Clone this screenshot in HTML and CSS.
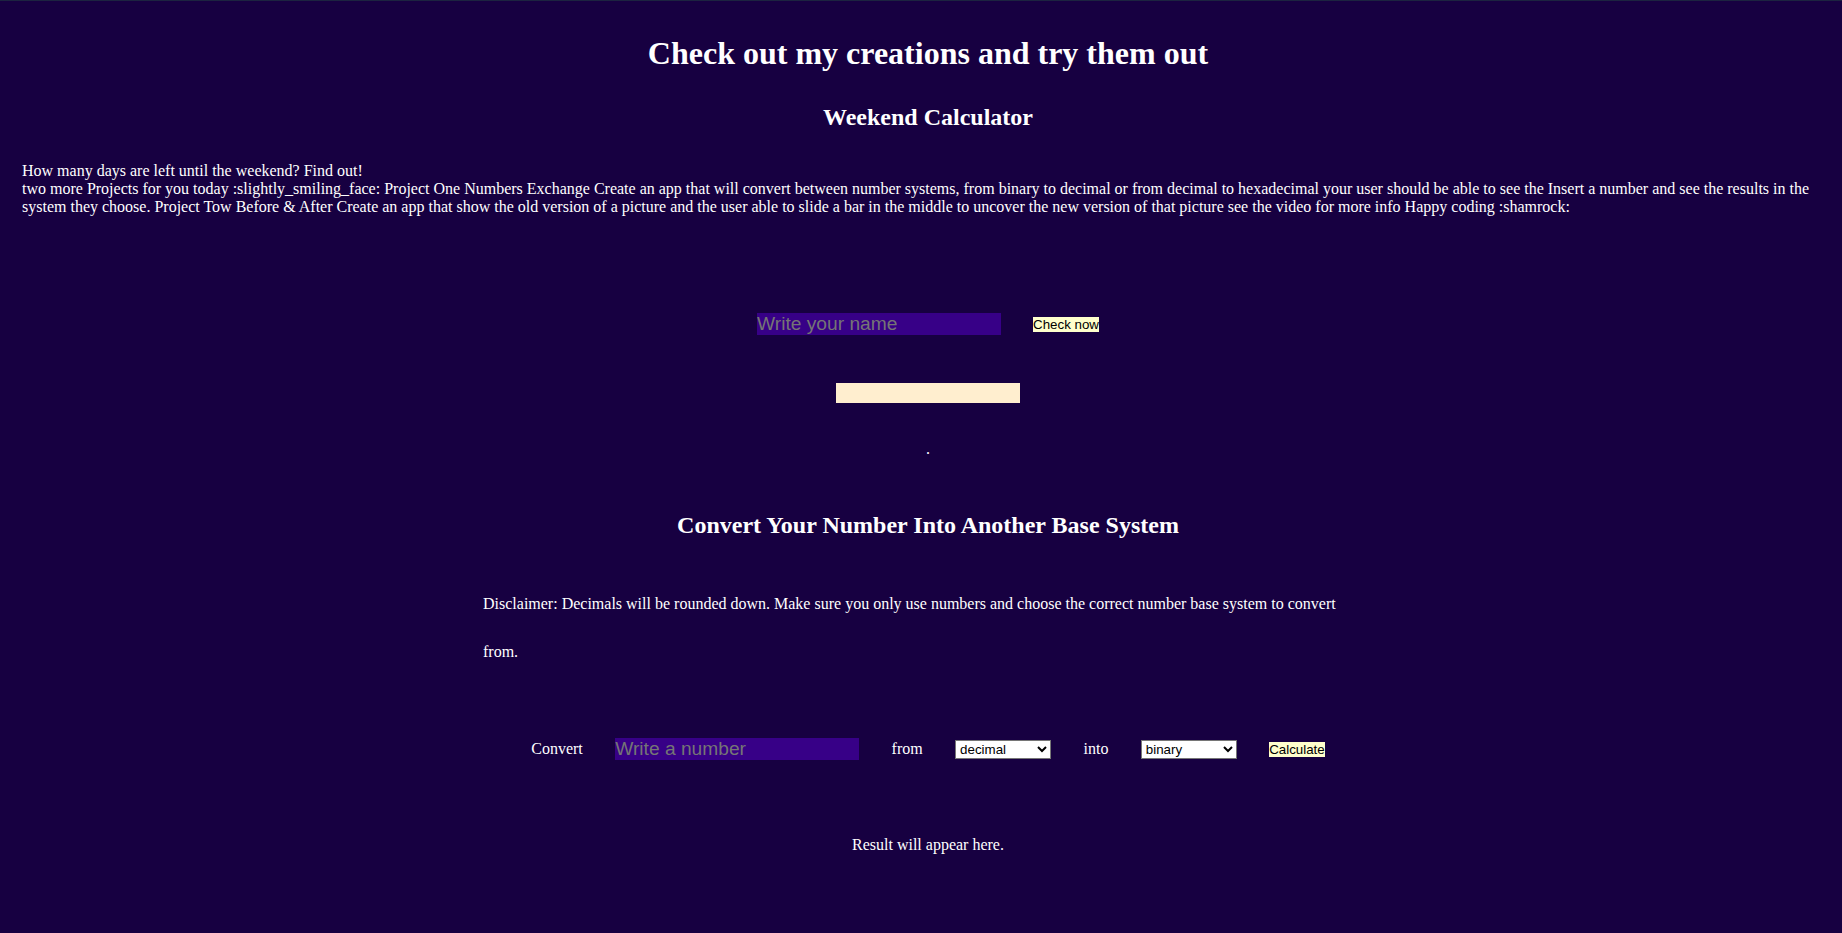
FILE: index.html
```html
<!DOCTYPE html>
<html lang="en">
<head>
<meta charset="utf-8">
<title>My creations</title>
<link rel="stylesheet" href="styles.css">
</head>
<body>
<main class="page">
  <h1 class="title">Check out my creations and try them out</h1>

  <section class="weekend">
    <h2 class="section-title">Weekend Calculator</h2>
    <div class="intro">
      <div>How many days are left until the weekend? Find out!</div>
      <div>two more Projects for you today :slightly_smiling_face: Project One Numbers Exchange Create an app that will convert between number systems, from binary to decimal or from decimal to hexadecimal your user should be able to see the Insert a number and see the results in the system they choose. Project Tow Before &amp; After Create an app that show the old version of a picture and the user able to slide a bar in the middle to uncover the new version of that picture see the video for more info Happy coding :shamrock:</div>
    </div>
    <div class="check-row">
      <input class="text-field" type="text" placeholder="Write your name">
      <button class="small-btn" type="button">Check now</button>
    </div>
    <div class="bar"></div>
    <div class="dot">.</div>
  </section>

  <section class="converter">
    <h2 class="section-title convert-title">Convert Your Number Into Another Base System</h2>
    <div class="disclaimer">
      <p>Disclaimer: Decimals will be rounded down. Make sure you only use numbers and choose the correct number base system to convert from.</p>
    </div>
    <div class="convert-row">
      <span class="label">Convert</span>
      <input class="text-field" type="text" placeholder="Write a number">
      <span class="label">from</span>
      <select class="base-select">
        <option>binary</option>
        <option selected>decimal</option>
        <option>hexadecimal</option>
      </select>
      <span class="label">into</span>
      <select class="base-select">
        <option selected>binary</option>
        <option>decimal</option>
        <option>hexadecimal</option>
      </select>
      <button class="small-btn" type="button">Calculate</button>
    </div>
    <div class="result">Result will appear here.</div>
  </section>
</main>
</body>
</html>
```

FILE: styles.css
```css
html {
  background: #170041;
  border-top: 1px solid #1c2340;
}

body {
  margin: 0 8px;
  background: #170041;
  color: #ffffff;
  font-family: "Liberation Serif", "Times New Roman", serif;
  font-size: 16px;
}

.page {
  padding-left: 14px;
}

.title {
  margin: 34px 0 0;
  font-size: 32px;
  line-height: 36px;
  font-weight: bold;
  text-align: center;
}

.section-title {
  margin: 32px 0 0;
  font-size: 24px;
  line-height: 28px;
  font-weight: bold;
  text-align: center;
}

.intro {
  margin-top: 31px;
  line-height: 18px;
}

.check-row {
  margin-top: 97px;
  height: 22px;
  display: flex;
  justify-content: center;
  align-items: center;
  gap: 32px;
}

.text-field {
  width: 244px;
  height: 22px;
  box-sizing: border-box;
  padding: 0;
  margin: 0;
  border: 0;
  outline: none;
  background: #370087;
  color: #ffffff;
  font-family: "Liberation Sans", Arial, sans-serif;
  font-size: 19.2px;
}

.text-field::placeholder {
  color: #757575;
}

.small-btn {
  margin: 0;
  padding: 0;
  border: 0;
  height: 15px;
  background: #ffffcc;
  color: #000000;
  font-family: "Liberation Sans", Arial, sans-serif;
  font-size: 13.333px;
  line-height: 15px;
}

.bar {
  margin: 48px auto 0;
  width: 184px;
  height: 20px;
  background: #ffeecf;
}

.dot {
  margin-top: 37px;
  line-height: 18px;
  text-align: center;
}

.convert-title {
  margin-top: 53px;
}

.disclaimer {
  width: 890px;
  margin: 41px auto 0;
}

.disclaimer p {
  margin: 0;
  padding-right: 30px;
  line-height: 48px;
}

.convert-row {
  margin-top: 62px;
  height: 22px;
  display: flex;
  justify-content: center;
  align-items: center;
  gap: 32.4px;
}

.label {
  line-height: 18px;
}

.base-select {
  width: 96px;
  height: 19px;
  margin: 0;
  background: #ffffff;
  color: #000000;
  border: 1px solid #767676;
  border-radius: 0;
  font-family: "Liberation Sans", Arial, sans-serif;
  font-size: 13.333px;
}

.result {
  margin-top: 76px;
  line-height: 18px;
  text-align: center;
}
```
